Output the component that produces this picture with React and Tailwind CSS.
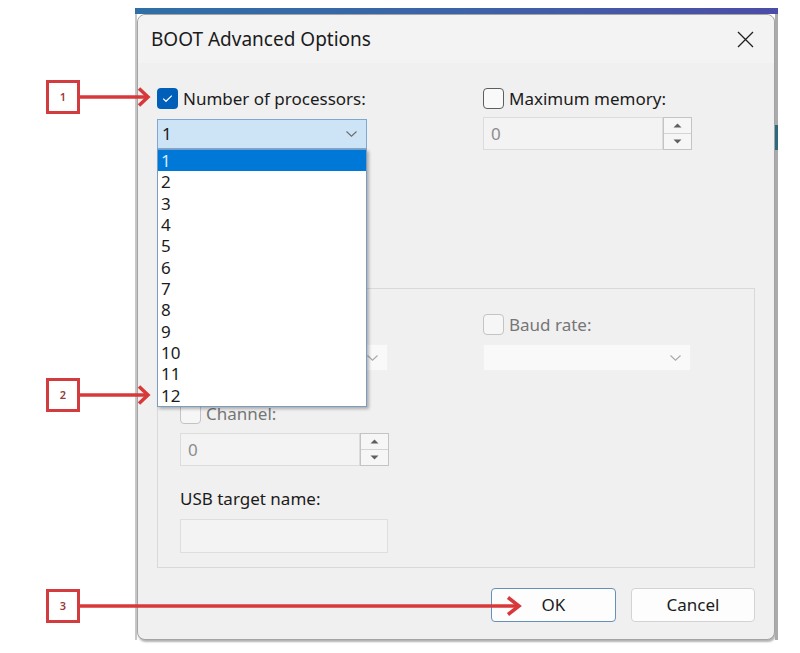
import React from 'react';

const items = ['1', '2', '3', '4', '5', '6', '7', '8', '9', '10', '11', '12'];

function Chevron({ color = '#6b6b6b' }) {
  return (
    <svg width="11" height="6" viewBox="0 0 11 6" fill="none">
      <path d="M0.5 0.5L5.5 5.2L10.5 0.5" stroke={color} strokeWidth="1.1" />
    </svg>
  );
}

function CheckBox({ checked, disabled, label }) {
  return (
    <div className="flex items-center h-[21px]">
      {checked ? (
        <span className="w-[21px] h-[21px] shrink-0 rounded-[4px] bg-[#005fb8] flex items-center justify-center">
          <svg width="21" height="21" viewBox="0 0 21 21" fill="none">
            <path d="M6.2 10.6L9 13.3L14.8 7.6" stroke="#ffffff" strokeWidth="1.2" />
          </svg>
        </span>
      ) : disabled ? (
        <span className="w-[21px] h-[21px] shrink-0 rounded-[4px] border border-[#c4c4c4] bg-[#f6f6f6]" />
      ) : (
        <span className="w-[21px] h-[21px] shrink-0 rounded-[4px] border border-[#5e5e5e] bg-[#f9f9f9]" />
      )}
      <span className={disabled ? 'ml-[5px] text-[17px] leading-[21px] text-[#767676]' : 'ml-[5px] text-[17px] leading-[21px] text-[#1b1b1b]'}>
        {label}
      </span>
    </div>
  );
}

function Spin() {
  return (
    <div className="flex h-[33px] w-[209px]">
      <div className="flex-1 flex items-center pl-[7px] border border-[#dcdcdc] bg-[#f3f3f3] text-[17px] text-[#8c8c8c]">0</div>
      <div className="w-[29px] flex flex-col border border-[#c4c4c4] bg-[#f6f6f6]">
        <div className="flex-1 flex items-center justify-center border-b border-[#d4d4d4]">
          <svg width="9" height="5" viewBox="0 0 9 5"><path d="M0.5 4.5L4.5 0.5L8.5 4.5Z" fill="#5f5f5f" /></svg>
        </div>
        <div className="flex-1 flex items-center justify-center">
          <svg width="9" height="5" viewBox="0 0 9 5"><path d="M0.5 0.5L4.5 4.5L8.5 0.5Z" fill="#5f5f5f" /></svg>
        </div>
      </div>
    </div>
  );
}

function DisabledSelect() {
  return (
    <div className="h-[27px] w-[208px] bg-[#f9f9f9] border border-[#f1f1f1] flex items-center justify-end pr-[9px]">
      <Chevron color="#a9a9a9" />
    </div>
  );
}

export default function App() {
  return (
    <div className="relative w-[800px] h-[653px] bg-white overflow-hidden font-['Noto_Sans',sans-serif]">
      {/* window behind the dialog */}
      <div className="ml-[135px] mt-[8px] w-[643px] flex flex-col">
        <div className="h-[6px] bg-linear-to-r from-[#2f6fa6] via-[#3c63a8] to-[#4b4ca6]" />
        <div className="flex">
          <div className="w-[2px] bg-[#c8c8c8]" />

          {/* dialog */}
          <div className="w-[638px] h-[626px] rounded-[8px] border border-[#a4a4a4] bg-[#f0f0f0] shadow-[1px_2px_2px_rgba(0,0,0,0.3)] flex flex-col">
            <div className="h-[48px] shrink-0 rounded-t-[8px] bg-[#f3f3f3] flex items-center justify-between pl-[13px] pr-[20px]">
              <span className="text-[19px] text-[#1b1b1b]">BOOT Advanced Options</span>
              <svg width="17" height="17" viewBox="0 0 17 17" fill="none">
                <path d="M1 1L16 16M16 1L1 16" stroke="#1f1f1f" strokeWidth="1.3" />
              </svg>
            </div>

            <div className="flex-1 flex flex-col pt-[25px] pl-[19px] pr-[19px] pb-[19px]">
              <div className="grid grid-cols-[326px_1fr] h-[62px]">
                <div>
                  <CheckBox checked label="Number of processors:" />
                  <div className="relative mt-[10px] w-[210px]">
                    <div className="h-[30px] border border-[#7ea8d1] bg-[#cde3f6] flex items-center justify-between pl-[4px] pr-[9px]">
                      <span className="text-[17px] text-[#1b1b1b]">1</span>
                      <Chevron />
                    </div>
                    {/* open list */}
                    <div className="absolute z-10 left-0 top-full w-[210px] border border-[#7c9dc2] bg-white shadow-[2px_2px_3px_rgba(0,0,0,0.28)]">
                      {items.map((n, i) => (
                        <div
                          key={n}
                          className={i === 0 ? 'h-[21.33px] leading-[21.33px] pl-[3px] text-[17px] bg-[#0078d7] text-[#d6ebff]' : 'h-[21.33px] leading-[21.33px] pl-[3px] text-[17px] text-[#1b1b1b]'}
                        >
                          {n}
                        </div>
                      ))}
                    </div>
                  </div>
                </div>
                <div>
                  <CheckBox label="Maximum memory:" />
                  <div className="mt-[8px]">
                    <Spin />
                  </div>
                </div>
              </div>

              {/* hidden under the open list */}
              <div className="h-[138px] flex flex-col justify-center gap-[28px]">
                <CheckBox label="PCI lock" />
                <CheckBox label="Debug" />
              </div>

              <div className="h-[280px] border border-[#d9d9d9] pt-[25px] pl-[22px]">
                <div className="grid grid-cols-[303px_1fr]">
                  <div>
                    <CheckBox disabled label="Debug port:" />
                    <div className="mt-[9px]">
                      <DisabledSelect />
                    </div>
                  </div>
                  <div>
                    <CheckBox disabled label="Baud rate:" />
                    <div className="mt-[9px]">
                      <DisabledSelect />
                    </div>
                  </div>
                </div>
                <div className="mt-[32px]">
                  <CheckBox disabled label="Channel:" />
                </div>
                <div className="mt-[9px]">
                  <Spin />
                </div>
                <div className="mt-[22px] h-[22px] leading-[22px] text-[17px] text-[#1b1b1b]">USB target name:</div>
                <div className="mt-[9px] h-[34px] w-[208px] border border-[#dedede] bg-[#f3f3f3]" />
              </div>

              <div className="mt-[20px] flex justify-end gap-[15px]">
                <button className="w-[125px] h-[34px] rounded-[4px] border border-[#6690ba] bg-[#fdfdfd] text-[17px] text-[#1b1b1b]">OK</button>
                <button className="w-[124px] h-[34px] rounded-[4px] border border-[#d3d3d3] bg-[#fdfdfd] text-[17px] text-[#1b1b1b]">Cancel</button>
              </div>
            </div>
          </div>

          <div className="w-[3px] bg-[#ababab] flex flex-col">
            <div className="h-[111px]" />
            <div className="h-[25px] bg-[#2d6a7e]" />
          </div>
        </div>
      </div>

      {/* annotation callouts */}
      <div className="absolute left-[46px] top-[80px] w-[34px] h-[34px] border-[3px] border-[#d33c3e] bg-white flex items-center justify-center text-[11px] font-semibold text-[#9a3a3a]">1</div>
      <div className="absolute left-[46px] top-[378px] w-[34px] h-[34px] border-[3px] border-[#d33c3e] bg-white flex items-center justify-center text-[11px] font-semibold text-[#9a3a3a]">2</div>
      <div className="absolute left-[46px] top-[589px] w-[34px] h-[34px] border-[3px] border-[#d33c3e] bg-white flex items-center justify-center text-[11px] font-semibold text-[#9a3a3a]">3</div>
      <svg className="absolute left-0 top-0 pointer-events-none" width="800" height="653" viewBox="0 0 800 653" fill="none">
        <g stroke="#d9383a" strokeWidth="3.5">
          <path d="M80 97H147" />
          <path d="M139 88.5L148 97L139 105.5" />
          <path d="M80 395H147" />
          <path d="M139 386.5L148 395L139 403.5" />
          <path d="M80 606H518" />
          <path d="M508 597.5L519 606L508 614.5" />
        </g>
      </svg>
    </div>
  );
}
